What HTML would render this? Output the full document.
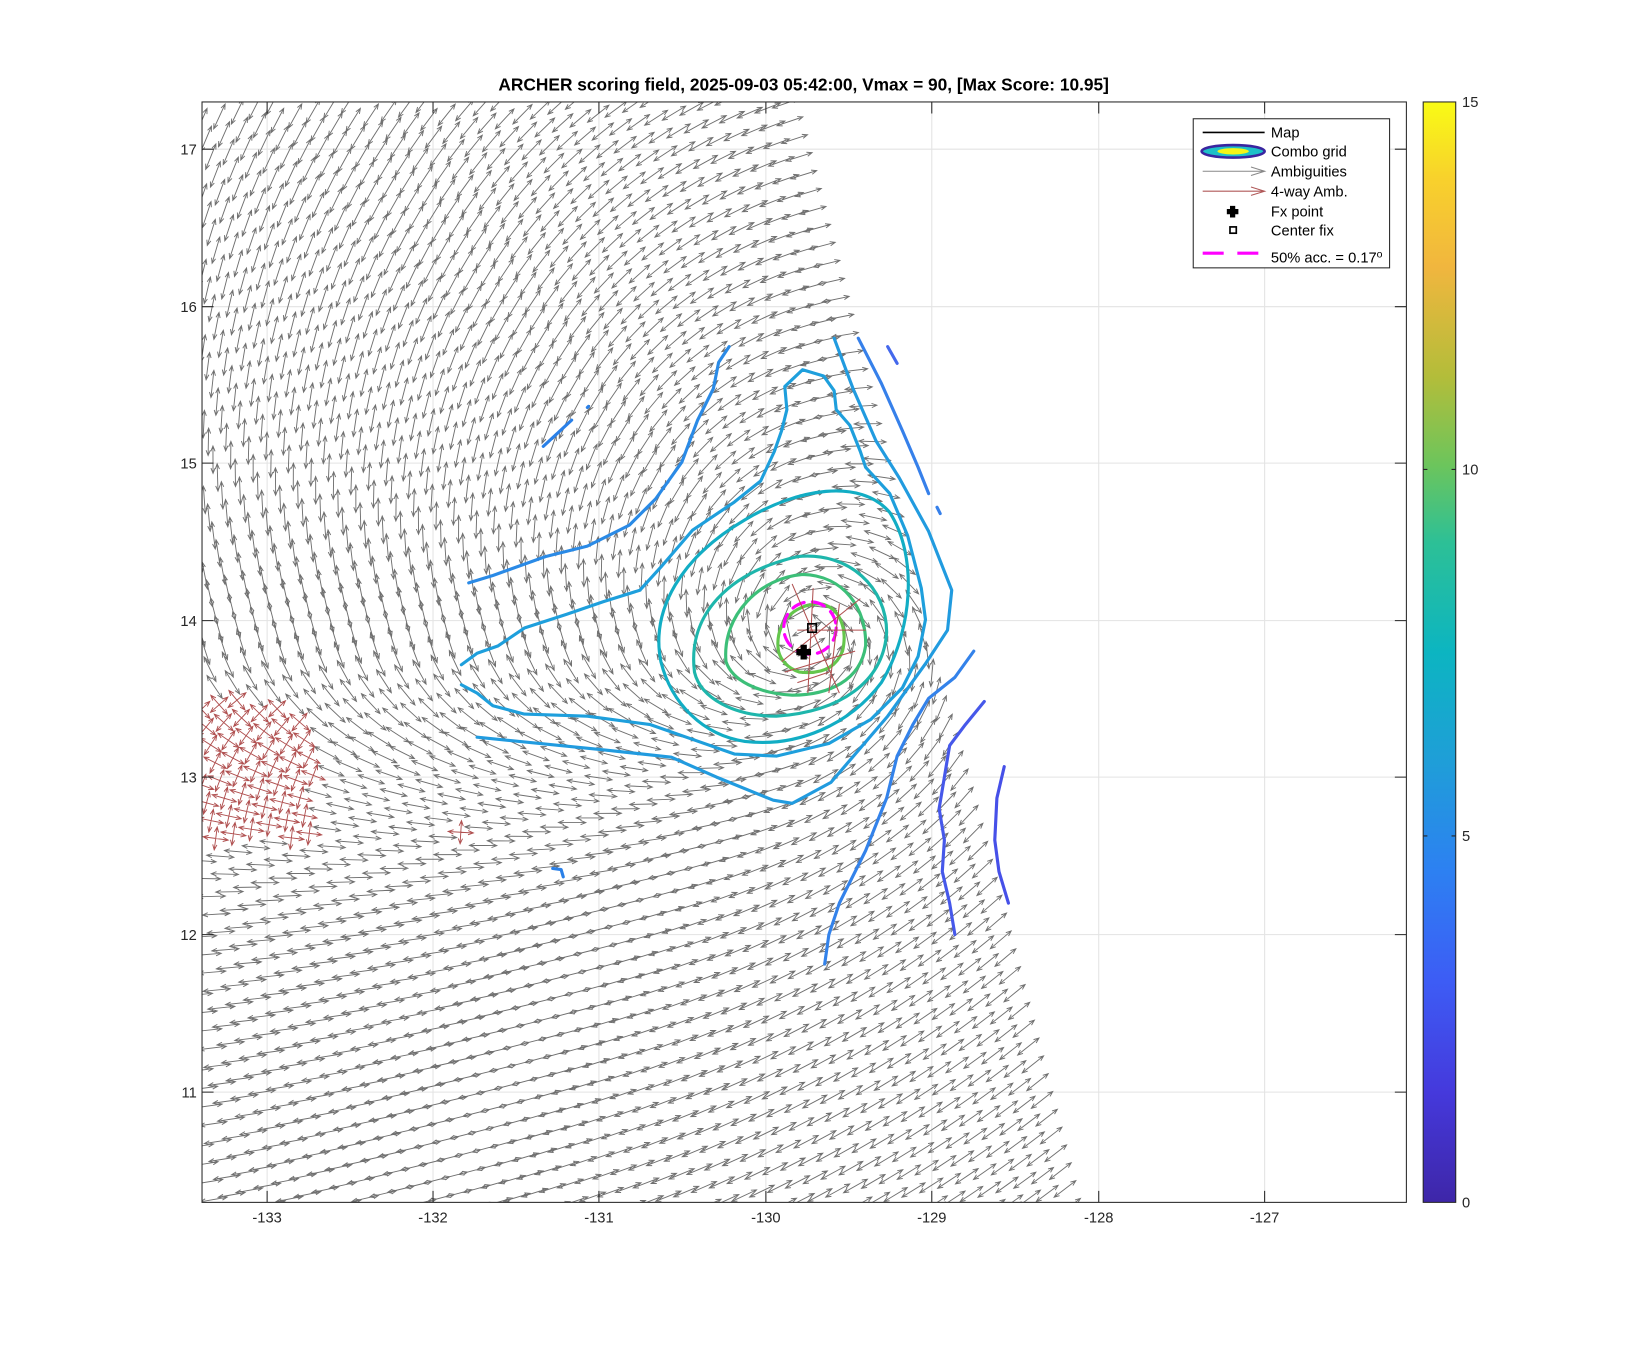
<!DOCTYPE html>
<html><head><meta charset="utf-8"><style>
html,body{margin:0;padding:0;background:#fff;}
svg{display:block;}
text{font-family:"Liberation Sans","DejaVu Sans",sans-serif;fill:#262626;}
</style></head><body>
<svg id="s" width="1646" height="1350" viewBox="0.6 -0.1 1567.6 1285.7" xmlns="http://www.w3.org/2000/svg">
<defs>
<linearGradient id="cb" x1="0" y1="1" x2="0" y2="0">
<stop offset="0" stop-color="#3e26a8"/>
<stop offset="0.1" stop-color="#4539dc"/>
<stop offset="0.2" stop-color="#3d5cf5"/>
<stop offset="0.3" stop-color="#2d80f2"/>
<stop offset="0.4" stop-color="#1f9ed8"/>
<stop offset="0.5" stop-color="#0cb5c1"/>
<stop offset="0.6" stop-color="#2dc096"/>
<stop offset="0.67" stop-color="#6cc55c"/>
<stop offset="0.75" stop-color="#b3bd3a"/>
<stop offset="0.85" stop-color="#f1b63e"/>
<stop offset="0.93" stop-color="#f8d12c"/>
<stop offset="1" stop-color="#f9fb15"/>
</linearGradient>
<clipPath id="ax"><rect x="193" y="97" width="1147" height="1048"/></clipPath>
</defs>
<rect x="193" y="97" width="1147" height="1048" fill="#fff"/>
<g stroke="#e3e3e3" stroke-width="1">
<line x1="255" y1="97" x2="255" y2="1145"/><line x1="413" y1="97" x2="413" y2="1145"/>
<line x1="571" y1="97" x2="571" y2="1145"/><line x1="730" y1="97" x2="730" y2="1145"/>
<line x1="888" y1="97" x2="888" y2="1145"/><line x1="1047" y1="97" x2="1047" y2="1145"/>
<line x1="1205" y1="97" x2="1205" y2="1145"/>
<line x1="193" y1="142" x2="1340" y2="142"/><line x1="193" y1="292" x2="1340" y2="292"/>
<line x1="193" y1="441" x2="1340" y2="441"/><line x1="193" y1="591" x2="1340" y2="591"/>
<line x1="193" y1="740" x2="1340" y2="740"/><line x1="193" y1="890" x2="1340" y2="890"/>
<line x1="193" y1="1040" x2="1340" y2="1040"/>
</g>
<g id="arrows" clip-path="url(#ax)" stroke-width="0.9" fill="none"></g>
<g clip-path="url(#ax)" fill="none" stroke-width="3" stroke-linejoin="round" stroke-linecap="round">
<path stroke="#2a8ae6" d="M447,555 L470,548 520,530 560,520 600,500 625,475 650,440 665,400 680,370 685,345 695,330"/>
<path stroke="#1e9fdc" d="M440,633 L455,622 475,615 500,598 540,585 575,573 610,562 630,540 660,505 700,478 725,458 738,430 745,410 750,390 748,368 765,352 785,358 795,372 797,390 810,405 820,430 825,445 848,470 865,510 878,560 882,590 875,625 860,655 830,685 790,708 740,720 700,718 660,704 620,690 560,682 500,680 470,672 455,660 440,652"/>
<path stroke="#219bdf" d="M795,322 L813,370 835,420 857,455 885,506 907,562 903,600 882,632 846,682 792,745 755,765 737,762 683,740 640,721 575,714 455,702"/>
<path stroke="#3680ea" d="M818,322 L840,365 860,410 875,445 885,470 M893,483 L896,489"/>
<path stroke="#4468ec" d="M846,330 L855,346"/>
<path stroke="#3382ea" d="M928,620 L910,645 885,665 870,690 855,720 845,760 825,810 800,860 790,890 786,918"/>
<path stroke="#4658ea" d="M938,668 L920,690 905,710 900,740 895,770 900,800 898,830 905,860 910,890"/>
<path stroke="#4650e8" d="M957,730 L950,760 948,800 952,830 961,860"/>
<path stroke="#2a80e8" d="M518,425 L545,400 M560,388 L561,387 M527,827 L535,828 537,835"/>
<path stroke="#12adc4" d="M630,630 C620,580 650,530 710,495 C760,465 820,455 848,488 C875,530 870,600 840,650 C810,690 760,712 710,706 C670,700 640,670 630,630 Z"/>
<path stroke="#1eb6ac" d="M662,640 C655,585 695,545 760,530 C810,525 845,560 845,602 C842,650 800,678 740,682 C700,682 668,665 662,640 Z"/>
<path stroke="#3cbf78" d="M692,630 C688,585 725,550 765,547 C805,548 826,580 825,615 C820,648 790,662 755,662 C722,660 698,648 692,630 Z"/>
<path stroke="#64c64c" d="M742,620 C738,595 755,575 782,575 C800,578 808,598 803,620 C796,638 780,642 762,640 C750,636 744,628 742,620 Z"/>
<circle cx="772" cy="598" r="25" stroke="#ff00ff" stroke-dasharray="12 8"/>
</g>
<g stroke="#b05050" stroke-width="1">
<path d="M755,556 L800,660 M775,560 L770,660 M745,630 L820,570 M748,640 L815,620 M760,600 L825,600 M790,640 L760,650 M800,575 L790,660"/>
</g>
<rect x="770" y="594" width="8" height="8" fill="none" stroke="#000" stroke-width="1.6"/>
<path d="M763,614 h6 v4 h4 v6 h-4 v4 h-6 v-4 h-4 v-6 h4z" fill="#000"/>
<rect x="193" y="97" width="1147" height="1048" fill="none" stroke="#262626" stroke-width="1"/>
<g stroke="#262626" stroke-width="1">
<path d="M255,1145v-11M413,1145v-11M571,1145v-11M730,1145v-11M888,1145v-11M1047,1145v-11M1205,1145v-11"/>
<path d="M255,97v11M413,97v11M571,97v11M730,97v11M888,97v11M1047,97v11M1205,97v11"/>
<path d="M193,142h11M193,292h11M193,441h11M193,591h11M193,740h11M193,890h11M193,1040h11"/>
<path d="M1340,142h-11M1340,292h-11M1340,441h-11M1340,591h-11M1340,740h-11M1340,890h-11M1340,1040h-11"/>
</g>
<g font-size="14" text-anchor="middle">
<text x="255" y="1164">-133</text><text x="413" y="1164">-132</text><text x="571" y="1164">-131</text>
<text x="730" y="1164">-130</text><text x="888" y="1164">-129</text><text x="1047" y="1164">-128</text><text x="1205" y="1164">-127</text>
</g>
<g font-size="14" text-anchor="end">
<text x="188" y="147">17</text><text x="188" y="297">16</text><text x="188" y="446">15</text>
<text x="188" y="596">14</text><text x="188" y="745">13</text><text x="188" y="895">12</text><text x="188" y="1045">11</text>
</g>
<text x="766" y="86" font-size="16.5" font-weight="bold" text-anchor="middle" style="fill:#000">ARCHER scoring field, 2025-09-03 05:42:00, Vmax = 90, [Max Score: 10.95]</text>
<rect x="1356" y="97" width="31" height="1048" fill="url(#cb)" stroke="#262626" stroke-width="1"/>
<g stroke="#262626"><path d="M1387,447h-4M1387,796h-4M1356,447h4M1356,796h4"/></g>
<g font-size="14"><text x="1393" y="102">15</text><text x="1393" y="452">10</text><text x="1393" y="801">5</text><text x="1393" y="1150">0</text></g>
<rect x="1137" y="113" width="187" height="142" fill="#fff" stroke="#262626" stroke-width="1"/>
<line x1="1146" y1="126" x2="1205" y2="126" stroke="#000" stroke-width="1.5"/>
<ellipse cx="1175" cy="144" rx="30" ry="6" fill="#1dc0c8" stroke="#3a25a0" stroke-width="2.5"/>
<ellipse cx="1175" cy="144" rx="15" ry="3" fill="#f4f418"/>
<g stroke="#888" fill="none"><path d="M1146,163 H1205 M1192,159 L1205,163 L1192,167"/></g>
<g stroke="#b05858" fill="none"><path d="M1146,182 H1205 M1192,178 L1205,182 L1192,186"/></g>
<path d="M1172,196 h5 v3 h3 v5 h-3 v3 h-5 v-3 h-3 v-5 h3z" fill="#000"/>
<rect x="1172" y="216" width="6" height="6" fill="none" stroke="#000" stroke-width="1.6"/>
<path d="M1146,241 H1166 M1179,241 H1199" stroke="#ff00ff" stroke-width="3"/>
<g font-size="14">
<text x="1211" y="131" style="fill:#000">Map</text><text x="1211" y="149" style="fill:#000">Combo grid</text>
<text x="1211" y="168" style="fill:#000">Ambiguities</text><text x="1211" y="187" style="fill:#000">4-way Amb.</text>
<text x="1211" y="206" style="fill:#000">Fx point</text><text x="1211" y="224" style="fill:#000">Center fix</text>
<text x="1211" y="250" style="fill:#000">50% acc. = 0.17<tspan dy="-5" font-size="10">o</tspan></text>
</g>
</svg>
<script>
(function(){
var g=document.getElementById('arrows'),NS='http://www.w3.org/2000/svg';
var cx=770,cy=605,sp=17.5,ang=Math.atan2(270,1048);
var ca=Math.cos(ang),sa=Math.sin(ang);
var dGray='',dRed='';
function seg(x,y,ux,uy,L,red){
 var x1=x-ux*L/2,y1=y-uy*L/2,x2=x+ux*L/2,y2=y+uy*L/2,h=5,w=2;
 var px=-uy,py=ux;
 var s='M'+x1.toFixed(1)+','+y1.toFixed(1)+'L'+x2.toFixed(1)+','+y2.toFixed(1);
 s+='M'+(x2-ux*h+px*w).toFixed(1)+','+(y2-uy*h+py*w).toFixed(1)+'L'+x2.toFixed(1)+','+y2.toFixed(1)+'L'+(x2-ux*h-px*w).toFixed(1)+','+(y2-uy*h-py*w).toFixed(1);
 s+='M'+(x1+ux*h+px*w).toFixed(1)+','+(y1+uy*h+py*w).toFixed(1)+'L'+x1.toFixed(1)+','+y1.toFixed(1)+'L'+(x1+ux*h-px*w).toFixed(1)+','+(y1+uy*h-py*w).toFixed(1);
 if(red)dRed+=s;else dGray+=s;
}
for(var i=-60;i<80;i++){for(var j=-20;j<100;j++){
 var x=150+i*sp*ca+j*sp*sa, y=90-i*sp*sa+j*sp*ca;
 if(x<190||y<94||y>1150)continue;
 var xb=750+(y-97)*270/1048; if(x>xb)continue;
 var dx=x-cx,dy=y-cy,r=Math.sqrt(dx*dx+dy*dy)+1;
 var tx=dy/r,ty=-dx/r;
 var b=Math.max(0,Math.min(1,(y-620)/250));
 var vx=tx-0.3*dx/r+b*1.3, vy=ty-0.3*dy/r-b*0.9;
 var n=Math.sqrt(vx*vx+vy*vy)||1; vx/=n;vy/=n;
 var L=(r<60)?30:26;
 var red=(x<300&&y>660&&y<800&&(y-660)>(x-193)*0.2)||(x>435&&x<455&&y>780&&y<805);
 if(red){seg(x,y,vx,vy,24,true);seg(x,y,-vy,vx,22,true);}
 else seg(x,y,vx,vy,L,false);
}}
var p1=document.createElementNS(NS,'path');p1.setAttribute('d',dGray);p1.setAttribute('stroke','#707070');g.appendChild(p1);
var p2=document.createElementNS(NS,'path');p2.setAttribute('d',dRed);p2.setAttribute('stroke','#b05050');g.appendChild(p2);
})();
</script>
</body></html>
